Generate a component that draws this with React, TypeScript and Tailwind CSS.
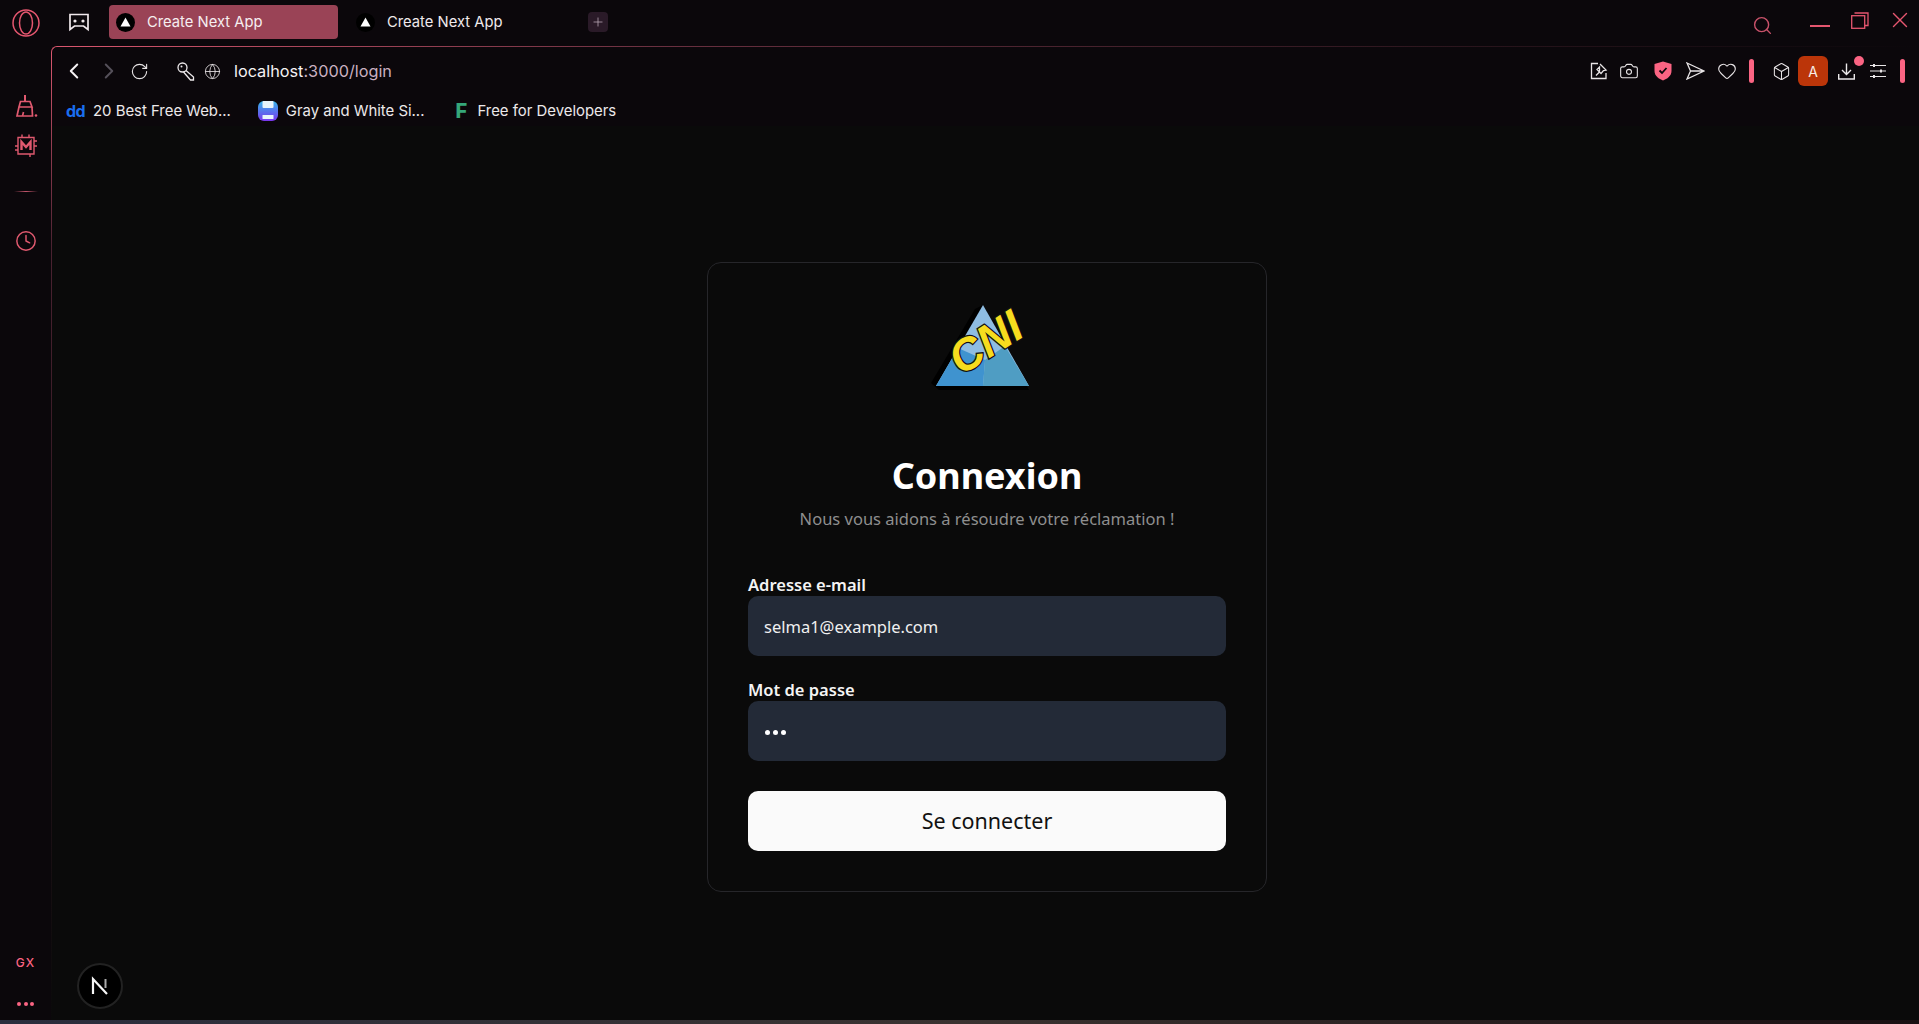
import { Camera, Heart, Box, Globe, RotateCw, ChevronLeft, ChevronRight, Search, Clock, Plus, X } from "lucide-react"

const sans = "font-['Noto_Sans','Open_Sans',sans-serif]"
const ui = "font-['Inter','Noto_Sans',sans-serif]"

function NextFavicon() {
  return (
    <span className="flex h-[19px] w-[19px] shrink-0 items-center justify-center rounded-full bg-black">
      <svg width="11" height="10" viewBox="0 0 11 10">
        <path d="M5.5 0.5L10.5 9.5H0.5Z" fill="#fff" />
      </svg>
    </span>
  )
}

function OperaLogo() {
  return (
    <svg width="28" height="28" viewBox="0 0 28 28" fill="none" stroke="#e5566f" strokeWidth="1.5">
      <circle cx="14" cy="14" r="13" />
      <ellipse cx="14" cy="14" rx="6.5" ry="11" />
    </svg>
  )
}

function GameIcon() {
  return (
    <svg width="22" height="20" viewBox="0 0 22 20" fill="none" stroke="#f0e8ec" strokeWidth="1.7">
      <path d="M2 2.5H20V17.5L15.5 14H6.5L2 17.5Z" />
      <circle cx="7" cy="9" r="1.6" fill="#f0e8ec" stroke="none" />
      <circle cx="15" cy="9" r="1.6" fill="#f0e8ec" stroke="none" />
    </svg>
  )
}

function BroomIcon() {
  return (
    <svg width="24" height="24" viewBox="0 0 24 24" fill="none" stroke="#e0596f" strokeWidth="1.7">
      <path d="M11 1V7" strokeWidth="2" />
      <path d="M6.5 7.5H16L18 13H5Z" />
      <path d="M5 13L3 22H18.5L18 13" />
      <path d="M8.5 22L9.5 18" />
      <circle cx="22" cy="21.5" r="1.3" fill="#e0596f" stroke="none" />
    </svg>
  )
}

function ChipIcon() {
  return (
    <svg width="24" height="24" viewBox="0 0 24 24" fill="none" stroke="#e0596f" strokeWidth="1.4">
      <path d="M4 3.5H20V20H4Z" />
      <path d="M8 0.5V3.5M15 0.5V3.5M1 12H4M1 16H4M20 7H23M20 12H23M16 20V23" />
      <path d="M7.5 16V8L12 13L16.5 8V16" strokeWidth="2.4" />
    </svg>
  )
}

function KeyIcon() {
  return (
    <svg width="18" height="19" viewBox="0 0 18 19" fill="none" stroke="#ece8ea" strokeWidth="1.3">
      <circle cx="5.5" cy="5.5" r="4.5" />
      <path d="M9 8.5L16.5 15V18H13.5L6.5 10" />
      <circle cx="4.5" cy="4.5" r="1" fill="#ece8ea" stroke="none" />
    </svg>
  )
}

function PinNoteIcon() {
  return (
    <svg width="18" height="18" viewBox="0 0 18 18" fill="none" stroke="#e8e4e6" strokeWidth="1.3">
      <path d="M8 1.5H1.5V16.5H16V11" />
      <path d="M10 2L16 8L13.5 8.5L11 11.5L9.5 10L6 13.5M9.5 10L7 7.5L9.5 5Z" />
    </svg>
  )
}

function ShieldIcon() {
  return (
    <svg width="18" height="20" viewBox="0 0 18 20">
      <path d="M9 0.5L17.5 3V10C17.5 15 13 18 9 19.5C5 18 0.5 15 0.5 10V3Z" fill="#fb6483" />
      <path d="M5.5 9.5L8 12L12.5 7" fill="none" stroke="#0b070b" strokeWidth="1.8" />
    </svg>
  )
}

function SendIcon() {
  return (
    <svg width="19" height="18" viewBox="0 0 19 18" fill="none" stroke="#e8e4e6" strokeWidth="1.3">
      <path d="M1 1L18 9L1 17L4.5 9ZM4.5 9H18" />
    </svg>
  )
}

function DownloadIcon() {
  return (
    <svg width="17" height="17" viewBox="0 0 17 17" fill="none" stroke="#ece8ea" strokeWidth="1.4">
      <path d="M8.5 0.5V11M4 7L8.5 11.5L13 7M0.7 11V16H16.3V11" />
    </svg>
  )
}

function SlidersIcon() {
  return (
    <svg width="16" height="16" viewBox="0 0 16 16" fill="none" stroke="#e8e4e6" strokeWidth="1.2">
      <path d="M0 2.5H16M0 8H16M0 13.5H16" />
      <path d="M4 1V4M11 6.5V9.5M4 12V15" strokeWidth="2" />
    </svg>
  )
}

function RestoreIcon() {
  return (
    <svg width="18" height="17" viewBox="0 0 18 17" fill="none" stroke="#e5566f" strokeWidth="1.3">
      <rect x="0.7" y="3.7" width="13" height="12.6" />
      <path d="M3.5 1H17V13.5H14" />
    </svg>
  )
}

function GrayWhiteIcon() {
  return (
    <svg width="20" height="22" viewBox="0 0 20 22">
      <defs>
        <linearGradient id="gw" x1="0" y1="0" x2="0" y2="1">
          <stop offset="0" stopColor="#35b6ea" />
          <stop offset="1" stopColor="#7a35ee" />
        </linearGradient>
      </defs>
      <rect x="0" y="1" width="20" height="20" rx="6" fill="url(#gw)" />
      <rect x="4.5" y="1" width="11" height="7" rx="1" fill="#e8f4fb" />
      <rect x="4.5" y="15" width="11" height="4" rx="0.5" fill="#e8f4fb" />
    </svg>
  )
}

function Bar() {
  return <span className="h-[24px] w-[5px] rounded-full bg-[#fb6483]" />
}

function Logo() {
  return (
    <svg width="110" height="92" viewBox="0 0 110 92">
      <path d="M6 83L50 9L58 5L104 90H14Z" fill="#000" />
      <path d="M11 86L58 5L104 86Z" fill="#8fbde2" />
      <path d="M11 86L33 48L60 60L58 86Z" fill="#3f93cf" />
      <path d="M58 86L60 60L80 46L104 86Z" fill="#4f9dc3" />
      <text
        transform="translate(36 76) rotate(-32)"
        fontFamily="'Liberation Sans', sans-serif"
        fontWeight="700"
        fontStyle="italic"
        fontSize="45"
        fill="#f6dc1e"
        stroke="#111"
        strokeWidth="2.5"
        paintOrder="stroke"
      >
        CNI
      </text>
    </svg>
  )
}

export default function App() {
  return (
    <div className={`relative flex h-screen w-full flex-col overflow-hidden bg-[#0b070b] text-white ${ui}`}>
      {/* tab strip */}
      <div className="flex h-[46px] shrink-0 items-start">
        <div className="flex w-[51px] justify-center pt-[9px]">
          <OperaLogo />
        </div>
        <div className="ml-[17px] pt-[12px]">
          <GameIcon />
        </div>
        <div className="ml-[19px] mt-[5px] flex h-[34px] w-[229px] items-center gap-[12px] rounded-[4px] bg-[#9a4356] pl-[7px] text-[14.75px] text-[#f6eef0]">
          <NextFavicon />
          Create Next App
        </div>
        <div className="ml-[18px] mt-[5px] flex h-[34px] items-center gap-[12px] text-[14.75px] text-[#f0eaec]">
          <NextFavicon />
          Create Next App
        </div>
        <div className="ml-[86px] mt-[12px] flex h-[20px] w-[20px] items-center justify-center rounded-[4px] bg-[#2a1a28]">
          <Plus size={14} strokeWidth={1.2} color="#c9b8c4" />
        </div>
        <div className="ml-auto flex items-start">
          <div className="mt-[15px]">
            <Search size={21} strokeWidth={1.6} color="#c9526a" />
          </div>
          <div className="ml-[37px] mt-[25px] h-[2px] w-[20px] bg-[#e5566f]" />
          <div className="ml-[21px] mt-[12px]">
            <RestoreIcon />
          </div>
          <div className="ml-[18px] mt-[7px] mr-[6px]">
            <X size={26} strokeWidth={1.3} color="#e5566f" />
          </div>
        </div>
      </div>

      <div className="flex min-h-0 flex-1">
        {/* sidebar */}
        <div className="flex w-[51px] shrink-0 flex-col items-center pt-[48px]">
          <BroomIcon />
          <div className="mt-[16px]">
            <ChipIcon />
          </div>
          <div className="mt-[33px] h-px w-[24px] bg-gradient-to-r from-transparent via-[#c4566c] to-transparent" />
          <div className="mt-[38px]">
            <Clock size={22} strokeWidth={1.6} color="#e0596f" />
          </div>
          <div className={`mt-auto text-[12px] font-medium tracking-[1px] text-[#fb6483] ${ui}`}>GX</div>
          <div className="mb-[14px] mt-[30px] flex gap-[2.5px]">
            <span className="h-[4px] w-[4px] rounded-full bg-[#fb6483]" />
            <span className="h-[4px] w-[4px] rounded-full bg-[#fb6483]" />
            <span className="h-[4px] w-[4px] rounded-full bg-[#fb6483]" />
          </div>
        </div>

        {/* browser page */}
        <div className="relative flex min-w-0 flex-1 flex-col rounded-tl-[6px] bg-[#0a0a0a]">
          <div className="absolute left-0 top-0 h-[8px] w-[8px] rounded-tl-[6px] border-l border-t border-[#d9566e]" />
          <div className="absolute left-[8px] right-0 top-0 h-px bg-gradient-to-r from-[#d9566e] via-[#6a3040] via-[32%] to-[#0b070b]" />
          <div className="absolute bottom-0 left-0 top-[8px] w-px bg-gradient-to-b from-[#d9566e] via-[#4a2230] via-[20%] to-transparent" />

          <div className="flex h-[50px] shrink-0 items-center bg-[#0b070b] pl-[10px] pr-[14px]">
            <ChevronLeft size={26} strokeWidth={1.8} color="#f6f2f4" />
            <div className="ml-[9px]">
              <ChevronRight size={26} strokeWidth={1.8} color="#55505a" />
            </div>
            <div className="ml-[8px]">
              <RotateCw size={19} strokeWidth={1.4} color="#e8e4e6" />
            </div>
            <div className="ml-[28px]">
              <KeyIcon />
            </div>
            <div className="ml-[9px]">
              <Globe size={17} strokeWidth={1.2} color="#e8e4e6" />
            </div>
            <div className="ml-[13px] text-[16.25px]">
              <span className="text-[#f6f2f4]">localhost</span>
              <span className="text-[#c9b0c0]">:3000/login</span>
            </div>
            <div className="ml-auto flex items-center">
              <PinNoteIcon />
              <div className="ml-[11px]">
                <Camera size={20} strokeWidth={1.3} color="#e8e4e6" />
              </div>
              <div className="ml-[15px]">
                <ShieldIcon />
              </div>
              <div className="ml-[14px]">
                <SendIcon />
              </div>
              <div className="ml-[12px]">
                <Heart size={20} strokeWidth={1.3} color="#e8e4e6" />
              </div>
              <div className="ml-[12px] flex">
                <Bar />
              </div>
              <div className="ml-[18px]">
                <Box size={19} strokeWidth={1.3} color="#e8e4e6" />
              </div>
              <div className="ml-[7px] flex h-[30px] w-[30px] items-center justify-center rounded-[6px] bg-[#bb3509] text-[14px] text-[#f6eee8]">
                A
              </div>
              <div className="relative ml-[10px]">
                <DownloadIcon />
                <span className="absolute -right-[9px] -top-[7px] h-[10px] w-[10px] rounded-full bg-[#fb6483]" />
              </div>
              <div className="ml-[15px]">
                <SlidersIcon />
              </div>
              <div className="ml-[14px] flex">
                <Bar />
              </div>
            </div>
          </div>

          <div className="flex h-[30px] shrink-0 items-center bg-[#0b070b] pl-[15px] text-[14.9px] text-[#ece8ea]">
            <span className="w-[27px] text-[16px] font-bold leading-none tracking-[-0.5px] text-[#1a6ef0]">dd</span>
            <span>20 Best Free Web...</span>
            <span className="ml-[27px] flex">
              <GrayWhiteIcon />
            </span>
            <span className="ml-[8px]">Gray and White Si...</span>
            <span className="ml-[31px] w-[22px] text-[20px] font-extrabold leading-none text-[#35a77a]">F</span>
            <span>Free for Developers</span>
          </div>

          {/* login card */}
          <div className="flex flex-1 items-start justify-center pl-[4px] pt-[136px]">
            <div className={`flex w-[560px] flex-col rounded-[14px] border border-[#26262a] bg-[#0a0a0a] px-[40px] pb-[40px] pt-[37px] ${sans}`}>
              <div className="mr-[14px] flex justify-center">
                <Logo />
              </div>
              <h1 className="mt-[62px] text-center text-[36px] font-bold leading-[44px] text-white">Connexion</h1>
              <p className="mt-[9px] text-center text-[16.5px] text-[#8f8f8f]">Nous vous aidons à résoudre votre réclamation !</p>
              <label className="mt-[42px] block text-[16.5px] font-semibold leading-[22px] text-[#f4f4f4]">Adresse e-mail</label>
              <div className="flex h-[60px] items-center rounded-[10px] bg-[#232a37] px-[16px] pt-[4px] text-[16.5px] text-[#f0f0f0]">
                selma1@example.com
              </div>
              <label className="mt-[23px] block text-[16.5px] font-semibold leading-[22px] text-[#f4f4f4]">Mot de passe</label>
              <div className="flex h-[60px] items-center gap-[3px] rounded-[10px] bg-[#232a37] px-[17px] pt-[4px]">
                <span className="h-[5px] w-[5px] rounded-full bg-white" />
                <span className="h-[5px] w-[5px] rounded-full bg-white" />
                <span className="h-[5px] w-[5px] rounded-full bg-white" />
              </div>
              <button className="mt-[30px] h-[60px] rounded-[10px] bg-[#fafafa] text-[21.5px] text-[#111]">Se connecter</button>
            </div>
          </div>
        </div>
      </div>

      <div className="h-[4px] shrink-0 bg-gradient-to-r from-[#2a2d3d] via-[#3a3230] to-[#1a0f12]" />

      {/* next dev indicator */}
      <div className="absolute bottom-[15px] left-[77px] flex h-[46px] w-[46px] items-center justify-center rounded-full border-2 border-[#222] bg-black">
        <svg width="20" height="20" viewBox="0 0 20 20" fill="none">
          <path d="M3 18V3L17 18" stroke="#f6f6f6" strokeWidth="2.2" />
          <path d="M15.5 3V12" stroke="#aaa" strokeWidth="2" />
        </svg>
      </div>
    </div>
  )
}
